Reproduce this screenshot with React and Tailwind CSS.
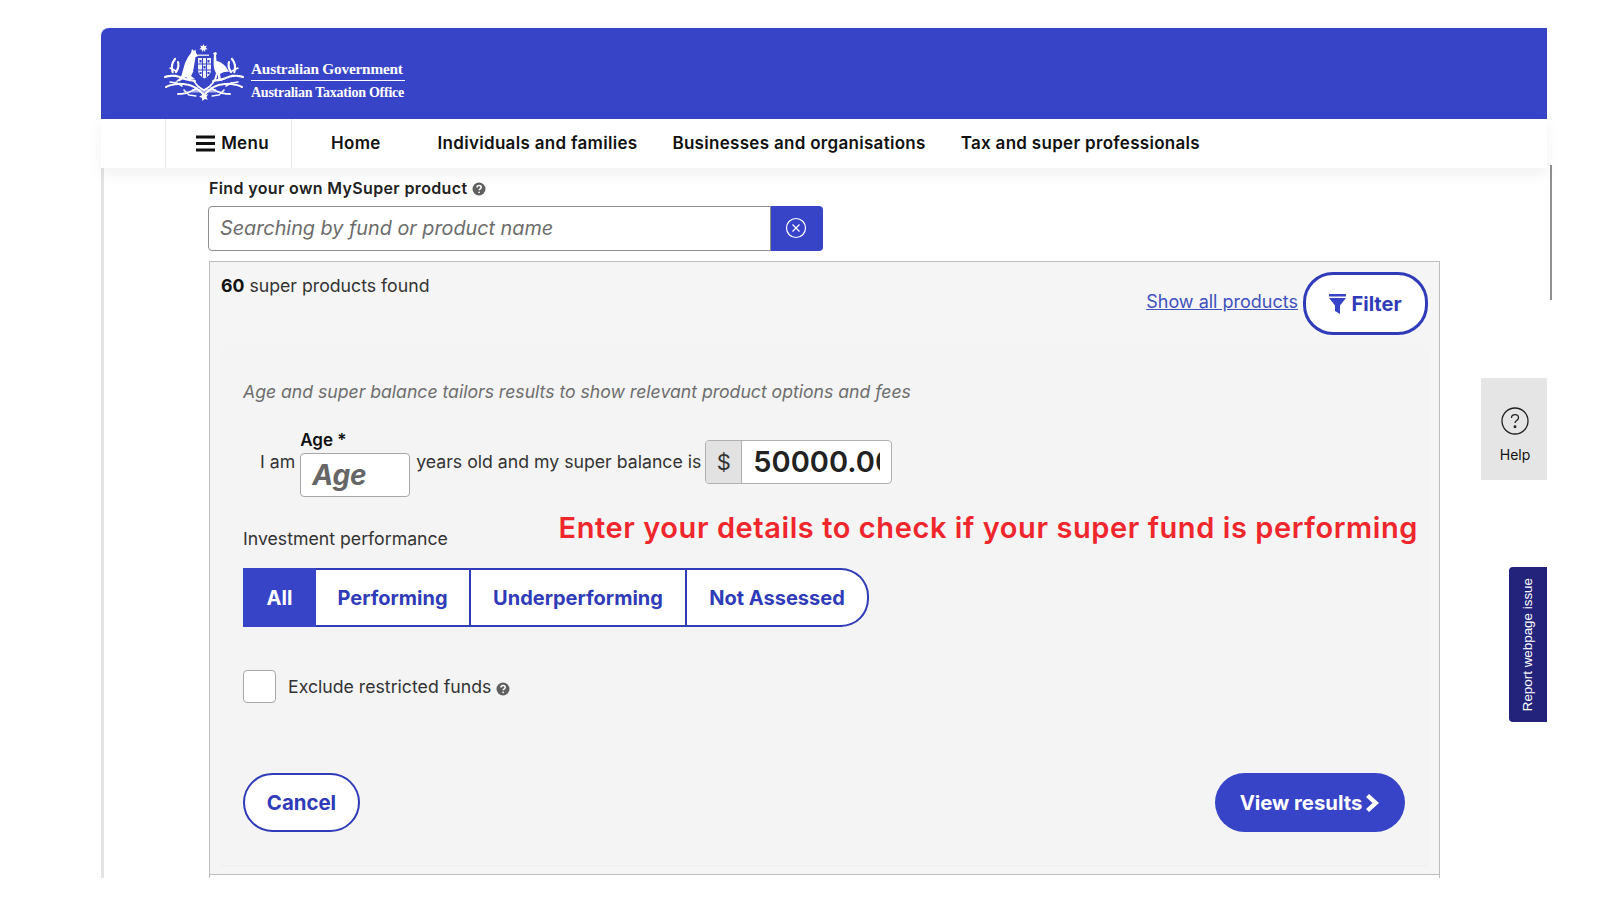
import React from "react";

function Arms() {
  return (
    <svg width="90" height="68" viewBox="0 0 90 68" fill="#fff" aria-hidden="true" className="shrink-0">
      <path d="M43.500 4l1 2.200 2.400-.7-1.200 2.200 2 1.500-2.500.3-.2 2.400-1.500-1.800-1.500 1.800-.2-2.400-2.500-.3 2-1.500-1.200-2.200 2.400.7z" />
      <path d="M38 14.500h11v1.500H38z" opacity=".8" />
      <path d="M32 9l2 2 1.500-1.500.5 3.500 2.500 3-3 1-.5 3-1 6-1 6-2 4 4 3h-7l-2-2-6 4-5 1 6-5 2-7 2-7 3-6 3-4z" />
      <path d="M53 13l3-1 1 2-1 1 .5 6c3.500 0 9.500 4 12.500 11-4-1-7 1-9 2l1 6 2 1h-5v-7l-2 6h-2l2-7c-2-3-3-8-2-18z" />
      <path d="M38 18h13v12c0 4-3 6.500-6.500 8.500-3.500-2-6.500-4.500-6.500-8.500z" opacity=".92" />
      <path d="M38 24h13M38 30h13M42.500 18v19M46.500 18v19" stroke="#3844c8" strokeWidth="1" fill="none" />
      <path d="M39.500 20h2v2.500h-2zM43.500 26h2v2.500h-2zM47.500 20h2v2.500h-2zM39.500 32h2v2h-2zM47.500 32h2v2h-2z" fill="#3844c8" />
      <g fill="none" stroke="#fff" strokeLinecap="round">
        <path d="M5 37c6-2 12-1.500 17 1 5 2 9 2 13 3M83 37c-6-2-12-1.500-17 1-5 2-9 2-13 3" strokeWidth="2.200" strokeDasharray="2.500 1" />
        <path d="M6 47c8-4 19-4 26-1 5 2 9 6 12 9M82 47c-8-4-19-4-26-1-5 2-9 6-12 9" strokeWidth="2" strokeDasharray="2 1.200" />
        <path d="M10 42l7 1 5 3M78 42l-7 1-5 3" strokeWidth="1.500" strokeDasharray="2 1" />
        <path d="M18 54c7 0 13-2 19-6M70 54c-7 0-13-2-19-6" strokeWidth="1.800" strokeDasharray="2 1" />
        <path d="M24 50l5 5 7 1M64 50l-5 5-7 1" strokeWidth="1.500" strokeDasharray="2 1" />
        <path d="M15 19c-3 4-4 8-2 14M18 22c1 4 0 7-2 10M72 19c3 4 4 8 2 14M69 22c-1 4 0 7 2 10" strokeWidth="2.200" strokeDasharray="2 1" />
        <path d="M10 28l6 3M78 28l-6 3" strokeWidth="1.500" />
        <path d="M34 41c3 5 6 7 10 9 4-2 7-4 10-9" strokeWidth="1.800" strokeDasharray="2 1" />
      </g>
      <path d="M32 49h24v3.500H32z" opacity=".6" />
      <path d="M43.500 52l1.800 2.700 3-.4-1.800 2.500 1.200 2.900-3-.8-2.200 2.100-.6-3-2.800-1.500 2.800-1.300z" />
    </svg>
  );
}

function Hint({ className }) {
  return (
    <svg viewBox="0 0 14 14" className={className} aria-hidden="true">
      <circle cx="7" cy="7" r="6.500" fill="#5f5f5f" />
      <path d="M5 5.400c0-1.200.9-2 2.100-2s2.100.8 2.100 1.900c0 1.600-2 1.500-2 3" fill="none" stroke="#fff" strokeWidth="1.500" />
      <circle cx="7.100" cy="10.300" r=".9" fill="#fff" />
    </svg>
  );
}

export default function App() {
  return (
    <div className="relative h-[900px] w-full overflow-hidden bg-white pt-[28px] pl-[101px] font-['Inter','Liberation_Sans',sans-serif] text-[#1f1f1f]">
      <div className="w-[1446px]">
        <header className="flex h-[91px] items-center rounded-tl-[8px] bg-[#3844c8] pl-[59px] text-white shadow-[0_-3px_5px_rgba(0,0,0,0.03)]">
          <Arms />
          <div className="mt-[15px] ml-[1px] w-[154px] font-['Liberation_Serif',serif] font-bold">
            <div className="border-b border-white pb-[1px] text-[15.300px] leading-[20px] tracking-[-0.2px] whitespace-nowrap">Australian Government</div>
            <div className="pt-[2px] text-[14px] leading-[20px] tracking-[-0.25px] whitespace-nowrap">Australian Taxation Office</div>
          </div>
        </header>

        <nav className="relative z-10 flex h-[49px] items-center bg-white pl-[64px] text-[17px] font-semibold tracking-[0.3px] text-[#111] shadow-[0_6px_14px_rgba(0,0,0,0.06)]">
          <div className="flex h-full w-[127px] items-center justify-center gap-[6px] border-x border-[#e8e8e8] pl-[8px]">
            <svg width="19" height="17" viewBox="0 0 19 17" aria-hidden="true">
              <path d="M0 2h19M0 8.500h19M0 15h19" stroke="#111" strokeWidth="3" />
            </svg>
            <span>Menu</span>
          </div>
          <span className="ml-[39px]">Home</span>
          <span className="ml-[57px]">Individuals and families</span>
          <span className="ml-[35px]">Businesses and organisations</span>
          <span className="ml-[35px]">Tax and super professionals</span>
        </nav>

        <main className="h-[710px] overflow-hidden border-l-[3px] border-[#e3e3e3] pl-[104px]">
          <label className="mt-[9px] flex h-[22px] items-center gap-[5px] pl-[1px] text-[16px] font-semibold tracking-[0.36px] text-[#222]">
            Find your own MySuper product
            <Hint className="mt-[2px] h-[14px] w-[14px]" />
          </label>
          <div className="mt-[7px] flex h-[45px] w-[615px]">
            <div className="flex flex-1 items-center rounded-l-[4px] border border-[#8f8f8f] bg-white pl-[11px] text-[19.800px] text-[#6c6c6c] italic">
              Searching by fund or product name
            </div>
            <button className="flex w-[52px] items-center justify-center rounded-r-[4px] bg-[#3844c8]">
              <svg width="22" height="22" viewBox="0 0 22 22" fill="none" stroke="#fff" strokeWidth="1.200" aria-hidden="true" className="-mt-[2px] -ml-[2px]">
                <circle cx="11" cy="11" r="9.500" />
                <path d="M7.500 7.500l7 7M14.500 7.500l-7 7" />
              </svg>
            </button>
          </div>

          <section className="mt-[10px] ml-[1px] h-[614px] w-[1231px] border border-[#bdbdbd] bg-[#f5f5f5] px-[11px] pt-[10px]">
            <div className="flex h-[78px] justify-between">
              <p className="pt-[1px] text-[17.700px] leading-[26px] text-[#333]">
                <b className="font-bold text-[#111]">60</b> super products found
              </p>
              <div className="flex h-[63px] items-center gap-[5px]">
                <a className="-mt-[4px] text-[18px] text-[#3f51bd] underline">Show all products</a>
                <button className="flex h-[63px] w-[125px] items-center justify-center gap-[5px] rounded-[30px] border-[3px] border-[#2f3bb8] bg-white text-[20px] font-bold text-[#2f3bb8]">
                  <svg width="17" height="20" viewBox="0 0 17 20" fill="#3844c8" aria-hidden="true">
                    <path d="M0 0h17v2.500H0zM0 4h17l-6 7.500V20l-5-3v-5.500z" />
                  </svg>
                  Filter
                </button>
              </div>
            </div>

            <div className="h-[515px] bg-[#f4f4f4] pt-[29px] pr-[10px] pl-[22px] shadow-[0_1px_2px_rgba(0,0,0,0.03)]">
              <p className="text-[17.630px] leading-[26px] text-[#6e6e6e] italic">Age and super balance tailors results to show relevant product options and fees</p>

              <div className="mt-[25px] flex h-[67px] pl-[17px]">
                <span className="mt-[19px] text-[17.700px] leading-[26px] text-[#333]">I am</span>
                <div className="ml-[5px] w-[110px]">
                  <label className="block h-[23px] text-[17px] leading-[20px] font-semibold text-[#111]">Age *</label>
                  <div className="flex h-[44px] items-center rounded-[4px] border border-[#a8a8a8] bg-white pl-[11px] text-[28px] font-bold text-[#666] italic">Age</div>
                </div>
                <span className="mt-[19px] ml-[6px] text-[17.700px] leading-[26px] text-[#333]">years old and my super balance is</span>
                <div className="mt-[10px] ml-[4px] flex h-[44px] w-[187px] overflow-hidden rounded-[4px] border border-[#b0b0b0] bg-white">
                  <span className="flex w-[36px] items-center justify-center border-r border-[#b0b0b0] bg-[#e2e2e2] text-[22px] text-[#333]">$</span>
                  <span className="w-[138px] overflow-hidden pl-[11px] text-[29px] leading-[42px] font-semibold whitespace-nowrap text-[#222]">50000.00</span>
                </div>
              </div>

              <div className="mt-[12px] flex h-[47px] items-start justify-between">
                <span className="mt-[17px] text-[17.700px] leading-[26px] text-[#333]">Investment performance</span>
                <span className="text-[29px] leading-[38px] font-semibold tracking-[0.58px] whitespace-nowrap text-[#f0262d]">Enter your details to check if your super fund is performing</span>
              </div>

              <div className="mt-[12px] flex h-[59px] w-[626px] text-[20px] font-bold text-[#2f3bb8]">
                <span className="flex w-[73px] items-center justify-center bg-[#3844c8] pt-[1px] text-white">All</span>
                <span className="flex w-[155px] items-center justify-center border-y-2 border-r-2 border-[#2f3bb8] bg-white pt-[1px]">Performing</span>
                <span className="flex w-[216px] items-center justify-center border-y-2 border-r-2 border-[#2f3bb8] bg-white pt-[1px]">Underperforming</span>
                <span className="flex w-[182px] items-center justify-center rounded-r-[28px] border-y-2 border-r-2 border-[#2f3bb8] bg-white pt-[1px]">Not Assessed</span>
              </div>

              <div className="mt-[43px] flex h-[33px] items-center">
                <span className="h-[33px] w-[33px] rounded-[4px] border border-[#a8a8a8] bg-white" />
                <span className="mt-[2px] ml-[12px] text-[17.700px] text-[#333]">Exclude restricted funds</span>
                <Hint className="mt-[4px] ml-[5px] h-[14px] w-[14px]" />
              </div>

              <div className="mt-[70px] flex justify-between pr-[13px]">
                <button className="h-[59px] w-[117px] rounded-[30px] border-2 border-[#2f3bb8] bg-white pt-[1px] text-[20.400px] font-bold text-[#2f3bb8]">Cancel</button>
                <button className="flex h-[59px] w-[190px] items-center justify-center gap-[4px] rounded-[30px] bg-[#3844c8] pt-[1px] text-[20.300px] font-bold text-white">
                  View results
                  <svg width="14" height="18" viewBox="0 0 14 18" fill="#fff" aria-hidden="true">
                    <path d="M3 0l10 9-10 9-3-3 6.500-6L0 3z" />
                  </svg>
                </button>
              </div>
            </div>
          </section>
          <div className="ml-[1px] h-[4px] w-[1231px] border-x border-[#bdbdbd]" />
        </main>
      </div>

      <div className="absolute top-[165px] left-[1550px] h-[135px] w-[2px] bg-[#8f8f8f]" />

      <aside className="absolute top-[378px] left-[1481px] flex h-[102px] w-[66px] flex-col items-center bg-[#e5e5e5] pt-[29px] pl-[2px] text-[#111]">
        <svg width="28" height="28" viewBox="0 0 28 28" fill="none" stroke="#222" strokeWidth="1.300" aria-hidden="true">
          <circle cx="14" cy="14" r="13" />
          <path d="M10.500 11c0-2 1.500-3.300 3.500-3.300s3.500 1.300 3.500 3c0 2.700-3.500 2.700-3.500 5.300" />
          <circle cx="14" cy="19.800" r=".8" fill="#222" />
        </svg>
        <span className="mt-[11px] text-[14px] leading-[18px]">Help</span>
      </aside>

      <aside className="absolute top-[567px] left-[1509px] flex h-[155px] w-[38px] items-center justify-center rounded-l-[4px] bg-[#23237c] text-white">
        <span className="rotate-180 font-['Liberation_Sans',sans-serif] text-[13.400px] whitespace-nowrap [writing-mode:vertical-rl]">Report webpage issue</span>
      </aside>
    </div>
  );
}
